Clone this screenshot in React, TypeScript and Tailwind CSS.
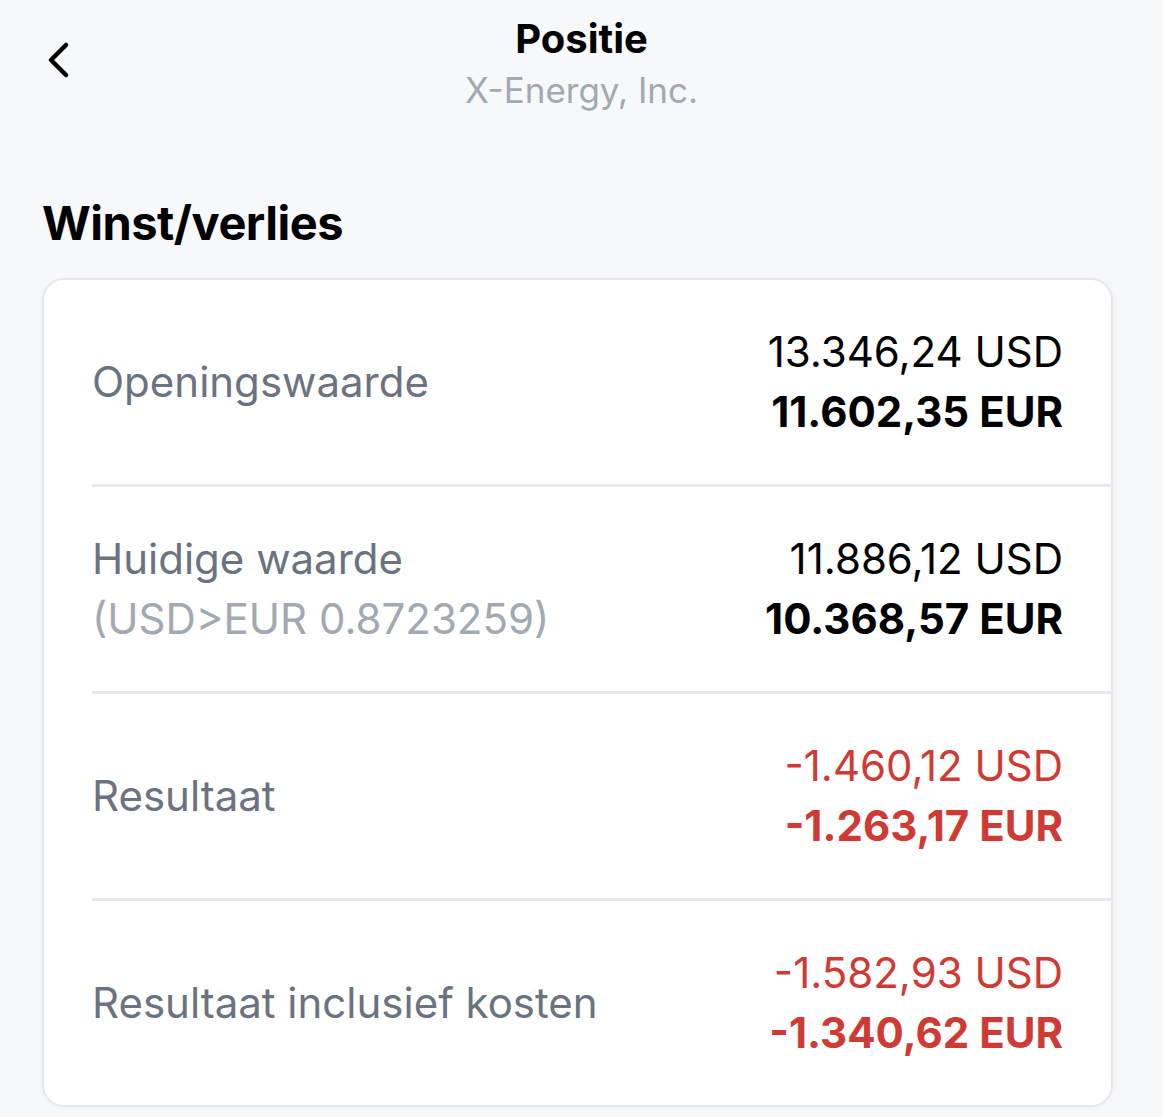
import * as React from "react";

type Row = {
  label: string;
  sub?: string;
  usd: string;
  eur: string;
  negative?: boolean;
};

const rows: Row[] = [
  { label: "Openingswaarde", usd: "13.346,24 USD", eur: "11.602,35 EUR" },
  {
    label: "Huidige waarde",
    sub: "(USD>EUR 0.8723259)",
    usd: "11.886,12 USD",
    eur: "10.368,57 EUR",
  },
  { label: "Resultaat", usd: "-1.460,12 USD", eur: "-1.263,17 EUR", negative: true },
  {
    label: "Resultaat inclusief kosten",
    usd: "-1.582,93 USD",
    eur: "-1.340,62 EUR",
    negative: true,
  },
];

function BackChevron() {
  return (
    <svg width="30" height="40" viewBox="0 0 30 40" fill="none">
      <path
        d="M22 5 L7 20 L22 35"
        stroke="#000"
        strokeWidth="4.5"
        strokeLinecap="round"
        strokeLinejoin="round"
      />
    </svg>
  );
}

function ResultRow({ row, last }: { row: Row; last: boolean }) {
  const valueColor = row.negative ? "text-[#cf3a34]" : "text-black";
  return (
    <div className="flex flex-col">
      <div className="flex h-[204px] items-center justify-between pl-[48px] pr-[48px]">
        <div className="flex flex-col leading-[60px]">
          <span className="text-[42px] text-[#6b7280]">{row.label}</span>
          {row.sub && <span className="text-[42px] text-[#a3a8b1]">{row.sub}</span>}
        </div>
        <div className={`flex flex-col items-end leading-[60px] ${valueColor}`}>
          <span className="text-[42px] font-normal">{row.usd}</span>
          <span className="text-[42px] font-bold">{row.eur}</span>
        </div>
      </div>
      {!last && <div className="ml-[48px] h-[3px] bg-[#e8e9ec]" />}
    </div>
  );
}

export default function App() {
  return (
    <div className="min-h-[1117px] bg-[#f7f8fa] font-['Inter',sans-serif] text-black">
      {/* Top bar */}
      <div className="relative flex h-[130px] flex-col items-center pt-[12px]">
        <button className="absolute left-[44px] top-[40px]">
          <BackChevron />
        </button>
        <span className="text-[40px] font-bold leading-[54px]">Positie</span>
        <span className="text-[35px] leading-[48px] text-[#a3a8b1]">X-Energy, Inc.</span>
      </div>

      <div className="pl-[42px] pr-[50px] pt-[64px]">
        <h2 className="mb-[26px] text-[47px] font-bold leading-[58px] tracking-[-0.5px]">
          Winst/verlies
        </h2>

        <div className="overflow-hidden rounded-[22px] border-2 border-[#e6e7ea] bg-white shadow-[0_1px_4px_rgba(0,0,0,0.04)]">
          {rows.map((row, i) => (
            <ResultRow key={row.label} row={row} last={i === rows.length - 1} />
          ))}
        </div>
      </div>
    </div>
  );
}
